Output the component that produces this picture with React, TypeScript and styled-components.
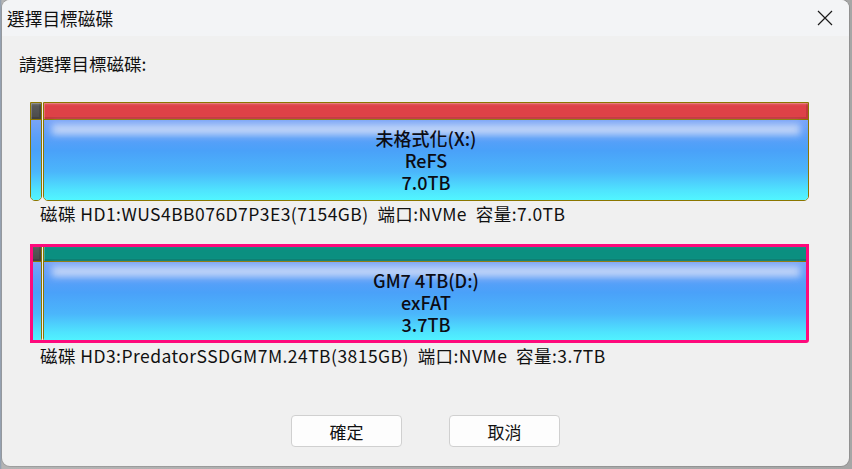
import React from "react";
import styled, { createGlobalStyle } from "styled-components";

const Global = createGlobalStyle`
  html, body { margin: 0; padding: 0; }
  body {
    width: 852px;
    height: 469px;
    overflow: hidden;
    background: #a3a3a3;
    font-family: "Noto Sans CJK TC", "Noto Sans", sans-serif;
    color: #111;
  }
`;

const Desktop = styled.div`
  width: 852px;
  height: 469px;
  box-sizing: border-box;
  padding-left: 2px;
  display: flex;
  align-items: flex-start;
  background: linear-gradient(90deg, #8a9bb0 0px, #b4b4b4 2px, #a6a6a6 100%);
`;

const Window = styled.div`
  width: 847px;
  height: 466px;
  background: #f0f0f0;
  border-radius: 8px;
  overflow: hidden;
  display: flex;
  flex-direction: column;
  box-shadow: 0 0 0 1px rgba(0, 0, 0, 0.12);
`;

const TitleBar = styled.div`
  height: 36px;
  flex: none;
  background: #f3f4f6;
  display: flex;
  align-items: center;
  justify-content: space-between;
  padding: 0 16px 0 5px;
`;

const Title = styled.div`
  font-size: 17.7px;
  line-height: 24px;
  color: #111;
`;

const CloseButton = styled.div`
  width: 16px;
  height: 16px;
  display: flex;
  align-items: center;
  justify-content: center;
`;

const Content = styled.div`
  flex: 1;
  display: flex;
  flex-direction: column;
  padding: 16px 40px 19px 17px;
`;

const Prompt = styled.div`
  font-size: 17.5px;
  line-height: 24px;
`;

const DiskSection = styled.div<{ $top: number }>`
  margin-top: ${(p) => p.$top}px;
  margin-left: 11px;
  display: flex;
  flex-direction: column;
`;

const DiskMap = styled.div<{ $selected?: boolean }>`
  position: relative;
  height: 99px;
  display: flex;
  gap: 1px;
  &::after {
    content: "";
    display: ${(p) => (p.$selected ? "block" : "none")};
    position: absolute;
    inset: 0;
    border: 3px solid #fe0a7c;
    border-radius: 0 0 3px 0;
    pointer-events: none;
  }
`;

const Partition = styled.div<{ $width?: number }>`
  ${(p) => (p.$width ? `width: ${p.$width}px; flex: none;` : "flex: 1;")}
  box-sizing: border-box;
  border: 1px solid #8b7600;
  border-radius: 0 0 5px 5px;
  overflow: hidden;
  display: flex;
  flex-direction: column;
`;

const PartHeader = styled.div<{ $color: string }>`
  height: 16px;
  flex: none;
  border-bottom: 1px solid #8b7600;
  background: ${(p) => p.$color};
  box-shadow: inset 1px 1px 0 rgba(255, 255, 255, 0.22),
    inset 0 3px 2px -1px rgba(255, 255, 255, 0.12),
    inset -2px -2px 0 rgba(0, 0, 0, 0.12);
`;

const PartBody = styled.div<{ $glow?: boolean }>`
  position: relative;
  flex: 1;
  display: flex;
  flex-direction: column;
  align-items: center;
  justify-content: center;
  background: linear-gradient(
    180deg,
    #7aa4f7 0%,
    #5a9ff8 22%,
    #4aa1f9 38%,
    #4bb6fb 65%,
    #4fe4fe 88%,
    #51f6ff 100%
  );
  &::before {
    content: "";
    display: ${(p) => (p.$glow ? "block" : "none")};
    position: absolute;
    left: 8px;
    right: 8px;
    top: 4px;
    height: 11px;
    background: #c9d9f7;
    filter: blur(3.5px);
    opacity: 0.9;
  }
`;

const PartLabel = styled.div`
  position: relative;
  font-size: 18px;
  line-height: 22px;
  font-weight: 500;
  color: #0c0c14;
  text-align: center;
  white-space: pre;
`;

const Caption = styled.div`
  margin-top: 2px;
  margin-left: 10px;
  font-size: 17.5px;
  letter-spacing: 0.45px;
  line-height: 22px;
  white-space: pre;
`;

const Footer = styled.div`
  margin-top: auto;
  margin-left: 23px;
  display: flex;
  justify-content: center;
  gap: 47px;
`;

const Button = styled.button`
  width: 111px;
  height: 32px;
  box-sizing: border-box;
  background: #fdfdfd;
  border: 1px solid #d0d0d0;
  border-radius: 4px;
  font-family: "Noto Sans CJK TC", "Noto Sans", sans-serif;
  font-size: 17px;
  color: #111;
  padding: 0;
`;

type Part = { width?: number; color: string; lines?: string[] };

const Disk = ({ top, selected, parts, caption }: { top: number; selected?: boolean; parts: Part[]; caption: string }) => (
  <DiskSection $top={top}>
    <DiskMap $selected={selected}>
      {parts.map((p, i) => (
        <Partition key={i} $width={p.width}>
          <PartHeader $color={p.color} />
          <PartBody $glow={!p.width}>
            {p.lines && <PartLabel>{p.lines.join("\n")}</PartLabel>}
          </PartBody>
        </Partition>
      ))}
    </DiskMap>
    <Caption>{caption}</Caption>
  </DiskSection>
);

export default function App() {
  return (
    <>
      <Global />
      <Desktop>
        <Window>
          <TitleBar>
            <Title>選擇目標磁碟</Title>
            <CloseButton>
              <svg width="16" height="16" viewBox="0 0 16 16">
                <path d="M1 1 L15 15 M15 1 L1 15" stroke="#1a1a1a" strokeWidth="1.2" fill="none" />
              </svg>
            </CloseButton>
          </TitleBar>
          <Content>
            <Prompt>請選擇目標磁碟:</Prompt>
            <Disk
              top={26}
              parts={[
                { width: 12, color: "linear-gradient(180deg,#5c5c5c,#4a4a4a)" },
                { color: "#de4147", lines: ["未格式化(X:)", "ReFS", "7.0TB"] },
              ]}
              caption="磁碟 HD1:WUS4BB076D7P3E3(7154GB)  端口:NVMe  容量:7.0TB"
            />
            <Disk
              top={19}
              selected
              parts={[
                { width: 12, color: "linear-gradient(180deg,#5c5c5c,#4a4a4a)" },
                { color: "#0b8f80", lines: ["GM7 4TB(D:)", "exFAT", "3.7TB"] },
              ]}
              caption="磁碟 HD3:PredatorSSDGM7M.24TB(3815GB)  端口:NVMe  容量:3.7TB"
            />
            <Footer>
              <Button>確定</Button>
              <Button>取消</Button>
            </Footer>
          </Content>
        </Window>
      </Desktop>
    </>
  );
}
